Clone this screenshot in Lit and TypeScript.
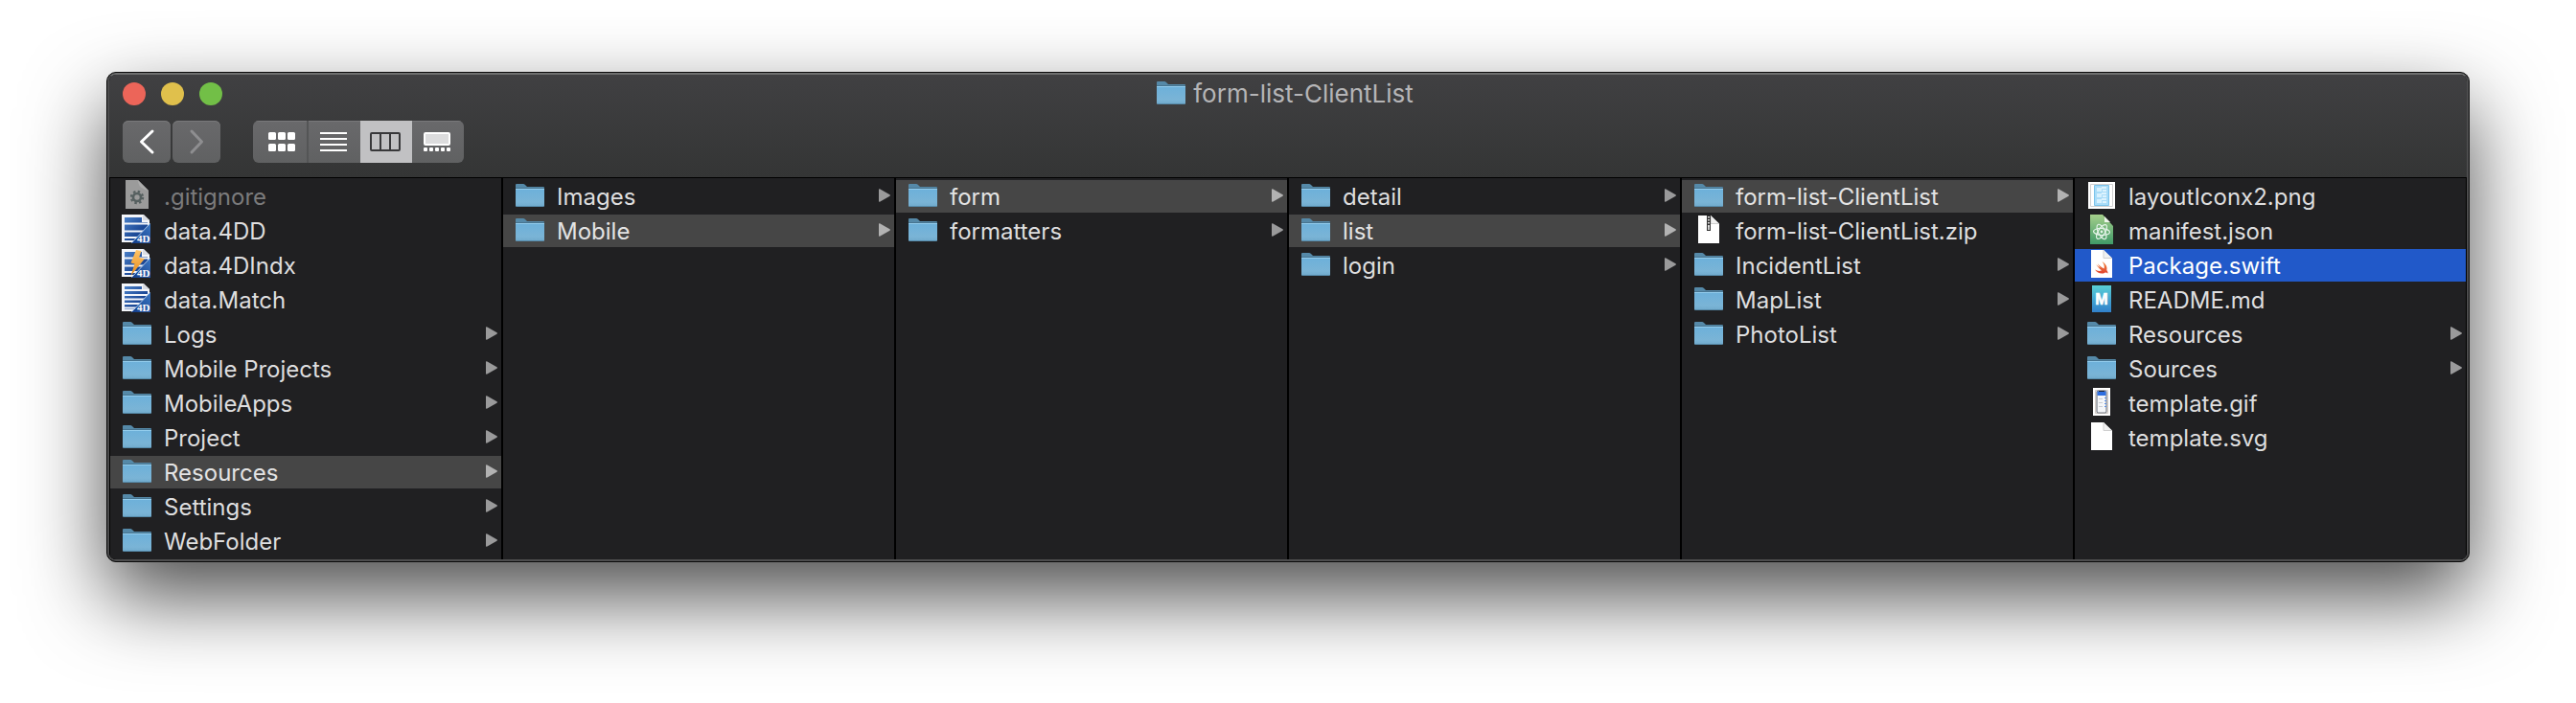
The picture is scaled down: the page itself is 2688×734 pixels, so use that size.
import { LitElement, html, css, svg, nothing } from "lit";
import { customElement, property, state } from "lit/decorators.js";
import { classMap } from "lit/directives/class-map.js";

type IconName =
  | "folder" | "hidden" | "data" | "index" | "match" | "zip"
  | "image" | "atom" | "swift" | "markdown" | "gif" | "blank";

interface Entry {
  name: string;
  icon: IconName;
  selected?: boolean;
  dimmed?: boolean;
  focused?: boolean;
}

const folder = (name: string, selected = false): Entry => ({ name, icon: "folder", selected });

const COLUMNS: Entry[][] = [
  [
    { name: ".gitignore", icon: "hidden", dimmed: true },
    { name: "data.4DD", icon: "data" },
    { name: "data.4DIndx", icon: "index" },
    { name: "data.Match", icon: "match" },
    folder("Logs"),
    folder("Mobile Projects"),
    folder("MobileApps"),
    folder("Project"),
    folder("Resources", true),
    folder("Settings"),
    folder("WebFolder"),
  ],
  [folder("Images"), folder("Mobile", true)],
  [folder("form", true), folder("formatters")],
  [folder("detail"), folder("list", true), folder("login")],
  [
    folder("form-list-ClientList", true),
    { name: "form-list-ClientList.zip", icon: "zip" },
    folder("IncidentList"),
    folder("MapList"),
    folder("PhotoList"),
  ],
  [
    { name: "layoutIconx2.png", icon: "image" },
    { name: "manifest.json", icon: "atom" },
    { name: "Package.swift", icon: "swift", focused: true },
    { name: "README.md", icon: "markdown" },
    folder("Resources"),
    folder("Sources"),
    { name: "template.gif", icon: "gif" },
    { name: "template.svg", icon: "blank" },
  ],
];

const page4d = (lines: number[], bolt: boolean) => svg`
  <defs>
    <linearGradient id="sheet" x1="0" y1="0" x2="1" y2="1">
      <stop offset="0" stop-color="#4a7fc6"/><stop offset=".6" stop-color="#1d4a98"/><stop offset="1" stop-color="#173f86"/>
    </linearGradient>
    <linearGradient id="corner" x1="0" y1="1" x2="1" y2="0">
      <stop offset="0" stop-color="#123a86"/><stop offset="1" stop-color="#3c78c4"/>
    </linearGradient>
    <linearGradient id="bolt" x1="0" y1="0" x2="0" y2="1">
      <stop offset="0" stop-color="#ffc568"/><stop offset="1" stop-color="#e48a1c"/>
    </linearGradient>
  </defs>
  <path d="M1 0H24L30 6V29H1Z" fill="#f4f6fa"/>
  <path d="M4 3H22V8H28V27H4Z" fill="url(#sheet)"/>
  ${lines.map((y) => svg`<path d="M3 ${y}H28" stroke="#f4f6fa" stroke-width="2"/>`)}
  <path d="M23 0V6H30Z" fill="#dadde3"/>
  ${bolt ? svg`<path d="M16 1L21.500 2L19 9L25 10L10.500 28L14.500 15.500L10.500 14.500Z" fill="url(#bolt)"/>` : nothing}
  <path d="M31 9V30H11Z" fill="url(#corner)"/>
  <path d="M11.500 29.500L30.500 9.500" stroke="#a9c6ea" stroke-width="1"/>
  <text x="17" y="29" font-family="Liberation Serif, serif" font-weight="700" font-size="11" fill="#fff">4D</text>`;

const sheet = svg`
  <path d="M6 1H19L28 10V30H6Z" fill="#fff"/>
  <path d="M19 1V9.500H28" fill="#f1f1f1" stroke="#cfcfcf" stroke-width="1"/>`;

const ICONS: Record<IconName, unknown> = {
  folder: svg`
    <defs>
      <linearGradient id="front" x1="0" y1="0" x2="0" y2="1">
        <stop offset="0" stop-color="#6cb0da"/><stop offset=".75" stop-color="#7ab4d6"/><stop offset="1" stop-color="#6fa9cb"/>
      </linearGradient>
    </defs>
    <path d="M2 10V5Q2 4 3 4H10Q11 4 12 5L13.500 6.500Q14 7 15 7H31Q32 7 32 8V10Z" fill="#5589a8"/>
    <path d="M2 8.500H32V26.500Q32 28 30.500 28H3.500Q2 28 2 26.500Z" fill="url(#front)"/>
    <path d="M2 8.500H32" stroke="#47748f" stroke-width="1"/>
    <path d="M2 9.500H32" stroke="#93cdee" stroke-width="1"/>
    <path d="M3 27.500H31" stroke="#568aa9" stroke-width="1"/>`,
  hidden: svg`
    <path d="M5 0H18L29 11V30H5Z" fill="#9b9b9b"/>
    <path d="M18 0Q18 5 21 7.500Q24 10 29 11Z" fill="#acacac"/>
    <circle cx="17" cy="18" r="4" fill="none" stroke="#566060" stroke-width="2.600"/>
    <circle cx="17" cy="18" r="6" fill="none" stroke="#566060" stroke-width="2.400" stroke-dasharray="2.400 2.312"/>`,
  data: page4d([9.5, 17.5, 24], false),
  index: page4d([9.5, 17.5, 24], true),
  match: page4d([7, 12, 16.5, 21, 25.5], false),
  zip: svg`
    ${sheet}
    <path d="M17 1V17" stroke="#333" stroke-width="4"/>
    <path d="M17 2V14" stroke="#ddd" stroke-width="2" stroke-dasharray="1.500 1.500"/>
    <path d="M17 12V16" stroke="#fff" stroke-width="1.500"/>`,
  image: svg`
    <path d="M3 2H31V30H3Z" fill="#fff"/>
    <path d="M5.500 4.500H28.500V27.500H5.500Z" fill="none" stroke="#d0d0d0" stroke-width="1"/>
    <path d="M9.500 5.500H24.500V26.500H9.500Z" fill="#a9dcf8" stroke="#7cc3ea" stroke-width="1"/>
    <path d="M12 10H17M12 16H17M12 22H17" stroke="#d8f1fe" stroke-width="4"/>
    <path d="M17 8H22M18 11H22M17 14H22M18 17H22M17 20H22M18 23H22" stroke="#eefaff" stroke-width="1.500"/>`,
  atom: svg`
    <defs>
      <linearGradient id="green" x1="0" y1="0" x2="0" y2="1">
        <stop offset="0" stop-color="#a5cf8b"/><stop offset="1" stop-color="#409a68"/>
      </linearGradient>
    </defs>
    <path d="M5 0H18L29 12V31H5Z" fill="url(#green)"/>
    <path d="M20 2V8H26Z" fill="#eef5ea"/>
    <g fill="none" stroke="#e6f4ea" stroke-width="1.200" transform="translate(17 18)">
      <ellipse rx="8.500" ry="3.500" transform="rotate(3)"/>
      <ellipse rx="8.500" ry="3.500" transform="rotate(63)"/>
      <ellipse rx="8.500" ry="3.500" transform="rotate(123)"/>
    </g>
    <circle cx="17" cy="18" r="1.400" fill="#e6f4ea"/>`,
  swift: svg`
    <defs>
      <linearGradient id="bird" x1="0" y1="0" x2="0" y2="1">
        <stop offset="0" stop-color="#f0883e"/><stop offset="1" stop-color="#e0432f"/>
      </linearGradient>
    </defs>
    ${sheet}
    <path d="M17.500 13C21.500 15.500 23.200 19 22.300 22C23.600 23.600 23.700 25 23.200 25.600C22.300 24.300 21 24.400 20 25C16.500 26.500 12.300 25 10 21.500C12.500 23 15 23.300 17 22.300C14.500 20.500 12.500 18 11.300 16.200C13.300 18 15.200 19.300 16 19.800C14.700 18.400 13.300 16.400 12.700 15.200C14.700 17.300 17.200 19.300 19.500 20.600C20.300 18.300 19.500 15.500 17.500 13Z" fill="url(#bird)"/>`,
  markdown: svg`
    <defs>
      <linearGradient id="teal" x1="0" y1="0" x2="0" y2="1">
        <stop offset="0" stop-color="#59cfd6"/><stop offset="1" stop-color="#3180cb"/>
      </linearGradient>
    </defs>
    <path d="M7 2H27V30H7Z" fill="url(#teal)"/>
    <text x="17" y="22" text-anchor="middle" font-family="Liberation Sans, sans-serif" font-weight="700" font-size="16" fill="#fff" stroke="#fff" stroke-width=".6">M</text>`,
  gif: svg`
    <path d="M8 1H26V30H8Z" fill="#fff"/>
    <path d="M10.500 3.500H23.500V27.500H10.500Z" fill="#fff" stroke="#d5cdc8" stroke-width="1"/>
    <rect x="12" y="4" width="10" height="23" rx="1.500" fill="#f5f7fa" stroke="#767b84" stroke-width="1.200"/>
    <path d="M12.500 4.500H21.500V9H12.500Z" fill="#2f6fe0"/>
    <path d="M14 4.500H20" stroke="#222a38" stroke-width="1"/>
    <path d="M14 12.500H18M14 16.500H18M14 20.500H18" stroke="#c9ccd2" stroke-width="1"/>
    <path d="M20 11.500H22M20 14.500H22M20 17.500H22M20 20.500H22" stroke="#5b8fe6" stroke-width="1"/>`,
  blank: sheet,
};

@customElement("file-icon")
class FileIcon extends LitElement {
  @property() name: IconName = "folder";

  static styles = css`
    :host { display: block; flex: none; width: 34px; height: 34px; }
    .glyph { display: block; width: 100%; height: 100%; }
  `;

  render() {
    return html`<svg class="glyph" viewBox="0 0 34 34" aria-hidden="true">${ICONS[this.name]}</svg>`;
  }
}

@customElement("file-column")
class FileColumn extends LitElement {
  @property({ attribute: false }) entries: Entry[] = [];

  static styles = css`
    :host { display: block; min-width: 0; background: #202022; }
    .list {
      list-style: none;
      margin: 0;
      padding: 2px 0;
      display: flex;
      flex-direction: column;
      gap: 2px;
    }
    .row {
      box-sizing: border-box;
      width: 100%;
      height: 34px;
      display: flex;
      align-items: center;
      gap: 11px;
      padding: 0 4px 0 11px;
      border: 0;
      background: none;
      color: #dededf;
      font: 400 24px/32px Inter, "Liberation Sans", sans-serif;
      text-align: left;
    }
    .selected { background: #464646; color: #e3e3e3; }
    .focused { background: #2159c9; color: #fff; }
    .dimmed { color: #7b7b7c; }
    .name { flex: 1; min-width: 0; padding-top: 2px; white-space: nowrap; overflow: hidden; text-overflow: ellipsis; }
    .arrow { flex: none; width: 12px; height: 14px; margin-bottom: 2px; fill: #9a9a9b; }
    .selected .arrow { fill: #b2b2b2; }
  `;

  render() {
    return html`<ul class="list">
      ${this.entries.map((e) => html`<li>
        <button type="button" class=${classMap({ row: true, selected: !!e.selected, focused: !!e.focused, dimmed: !!e.dimmed })}>
          <file-icon .name=${e.icon}></file-icon>
          <span class="name">${e.name}</span>
          ${e.icon === "folder"
            ? html`<svg class="arrow" viewBox="0 0 12 14" aria-hidden="true"><path d="M0 1Q0 0 1 .300L11.500 6.300Q12.300 7 11.500 7.700L1 13.700Q0 14 0 13Z"/></svg>`
            : nothing}
        </button>
      </li>`)}
    </ul>`;
  }
}

const VIEWS = [
  {
    label: "Icons",
    art: svg`<g fill="#fff">${[8, 20].map((y) => [5, 15, 25].map((x) => svg`<rect x=${x} y=${y} width="8" height="8" rx="1.500"/>`))}</g>`,
  },
  {
    label: "List",
    art: svg`<path d="M2 9H30M2 15H30M2 21H30M2 27H30" stroke="#fff" stroke-width="2"/>`,
  },
  {
    label: "Columns",
    art: svg`<g fill="none" stroke="#38383a" stroke-width="2"><rect x="1" y="9" width="30" height="18" rx="1"/><path d="M11 9V27M21 9V27"/></g>`,
  },
  {
    label: "Gallery",
    art: svg`<rect x="3" y="9" width="26" height="12" rx="1" fill="#dcdcdd" stroke="#fff" stroke-width="2"/>
      <g fill="#fff">${[2, 8, 14, 20, 26].map((x) => svg`<rect x=${x} y="24" width="4" height="4" rx="1"/>`)}</g>`,
  },
];

@customElement("app-root")
class AppRoot extends LitElement {
  @state() private view = "Columns";

  static styles = css`
    :host {
      display: block;
      padding: 75px 111px 147px;
      background: #fff;
      overflow: hidden;
      font-family: Inter, "Liberation Sans", sans-serif;
    }
    .window {
      border: 1px solid #0a0a0a;
      border-radius: 10px;
      background: #0a0a0a;
      box-shadow: 0 36px 84px rgba(0, 0, 0, 0.7);
    }
    .frame {
      border: 2px solid #4c4c4d;
      border-top-color: #6e6f6f;
      border-radius: 9px;
      overflow: hidden;
    }
    .titlebar {
      padding: 8px 14px 15px;
      border-bottom: 1px solid #000;
      background: linear-gradient(#404042, #343535);
      display: flex;
      flex-direction: column;
      gap: 16px;
    }
    .heading { display: grid; grid-template-columns: 1fr auto 1fr; grid-template-rows: 24px; align-items: center; }
    .lights { display: flex; gap: 16px; }
    .light { width: 24px; height: 24px; padding: 0; border: 0; border-radius: 50%; }
    .close { background: #ec6559; }
    .minimize { background: #e0c04c; }
    .zoom { background: #72bf47; }
    .title {
      margin: 0;
      padding-right: 8px;
      display: flex;
      align-items: center;
      gap: 6px;
      color: #b5b5b7;
      font-size: 26px;
      line-height: 32px;
      font-weight: 400;
    }
    .toolbar { display: flex; gap: 34px; }
    .group { display: flex; gap: 2px; }
    .button, .segment {
      height: 44px;
      padding: 0;
      border: 0;
      display: grid;
      place-items: center;
      background: linear-gradient(#69696b, #606162);
      box-shadow: inset 0 1px #79797b;
    }
    .button { width: 50px; border-radius: 6px; }
    .segments { display: flex; border-radius: 6px; overflow: hidden; }
    .segment { width: 54px; }
    .segment:first-child { width: 58px; border-right: 2px solid #545556; }
    .segment.active { background: #c1c1c3; box-shadow: none; }
    .art { display: block; width: 34px; height: 36px; }
    .chevron { display: block; width: 20px; height: 28px; fill: none; stroke: #fff; stroke-width: 3; stroke-linecap: round; stroke-linejoin: round; }
    .forward { stroke: #8e8e90; }
    .browser {
      display: grid;
      grid-template-columns: repeat(6, minmax(0, 1fr));
      gap: 2px;
      padding: 0 1px;
      background: #000;
    }
  `;

  render() {
    return html`<main class="window"><div class="frame">
      <header class="titlebar">
        <div class="heading">
          <div class="lights">
            <button type="button" class="light close" aria-label="Close"></button>
            <button type="button" class="light minimize" aria-label="Minimize"></button>
            <button type="button" class="light zoom" aria-label="Zoom"></button>
          </div>
          <h1 class="title"><file-icon .name=${"folder"}></file-icon><span>form-list-ClientList</span></h1>
        </div>
        <div class="toolbar">
          <div class="group">
            <button type="button" class="button" aria-label="Back">
              <svg class="chevron" viewBox="0 0 20 28"><path d="M16 3L4.500 14L16 25"/></svg>
            </button>
            <button type="button" class="button" aria-label="Forward">
              <svg class="chevron forward" viewBox="0 0 20 28"><path d="M5 3L15.500 14L5 25"/></svg>
            </button>
          </div>
          <div class="segments" role="group" aria-label="View">
            ${VIEWS.map((v) => html`<button
              type="button"
              class=${classMap({ segment: true, active: v.label === this.view })}
              aria-label=${v.label}
              aria-pressed=${v.label === this.view}
              @click=${() => (this.view = v.label)}
            ><svg class="art" viewBox="0 0 34 36">${v.art}</svg></button>`)}
          </div>
        </div>
      </header>
      <section class="browser">
        ${COLUMNS.map((entries) => html`<file-column .entries=${entries}></file-column>`)}
      </section>
    </div></main>`;
  }
}
